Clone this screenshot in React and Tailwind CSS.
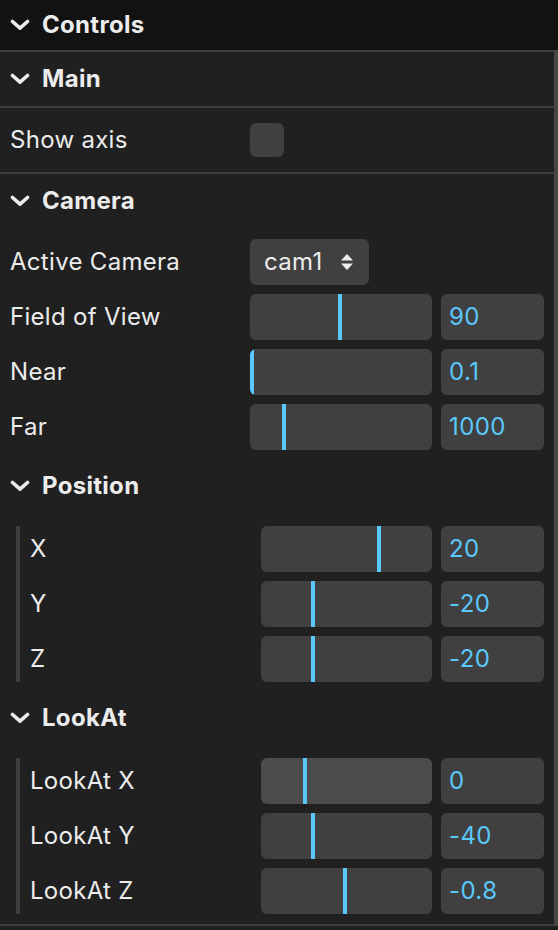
import React from 'react';

const font = { fontFamily: 'Inter, "Noto Sans", sans-serif' };

function Chevron() {
  return (
    <svg width="20" height="12" viewBox="0 0 20 12" className="shrink-0">
      <polyline points="2.5,2.5 10,9.2 17.5,2.5" fill="none" stroke="#ececec" strokeWidth="3.6" strokeLinecap="round" strokeLinejoin="round" />
    </svg>
  );
}

function FolderTitle({ title, className = '' }) {
  return (
    <div className={`flex items-center gap-[12px] px-[10px] ${className}`}>
      <Chevron />
      <span className="text-[24px] tracking-[0.3px] font-bold text-[#ececec]">{title}</span>
    </div>
  );
}

function Slider({ pos, value, hover }) {
  return (
    <div className="flex gap-[9px] flex-1 h-[46px]">
      <div className={`relative flex-1 rounded-[6px] overflow-hidden ${hover ? 'bg-[#4c4c4c]' : 'bg-[#404040]'}`}>
        <div className="absolute top-0 bottom-0 w-[4px] bg-[#5ac8fa]" style={{ left: `${pos}px` }} />
      </div>
      <div className="w-[103px] rounded-[6px] bg-[#404040] flex items-center px-[8px] text-[24px] tracking-[0.4px] text-[#5ac8fa]">
        {value}
      </div>
    </div>
  );
}

function Row({ label, labelWidth = 'w-[240px]', children }) {
  return (
    <div className="flex items-center h-[46px]">
      <span className={`${labelWidth} shrink-0 text-[24px] tracking-[0.3px] text-[#ececec]`}>{label}</span>
      {children}
    </div>
  );
}

export default function App() {
  const cameraRows = [
    { label: 'Field of View', pos: 88, value: '90' },
    { label: 'Near', pos: 0, value: '0.1' },
    { label: 'Far', pos: 32, value: '1000' },
  ];
  const positionRows = [
    { label: 'X', pos: 116, value: '20' },
    { label: 'Y', pos: 50, value: '-20' },
    { label: 'Z', pos: 50, value: '-20' },
  ];
  const lookAtRows = [
    { label: 'LookAt X', pos: 42, value: '0', hover: true },
    { label: 'LookAt Y', pos: 50, value: '-40' },
    { label: 'LookAt Z', pos: 82, value: '-0.8' },
  ];

  return (
    <div className="w-[558px] h-[930px] bg-[#202020] overflow-hidden" style={font}>
      {/* Root header */}
      <div className="h-[50px] bg-[#121212] flex items-center gap-[12px] px-[10px]">
        <Chevron />
        <span className="text-[24px] tracking-[0.3px] font-bold text-[#ececec]">Controls</span>
      </div>

      <div className="border-r-4 border-[#474747]">
        {/* Main */}
        <div className="border-t-2 border-[#3d3d3d]">
          <FolderTitle title="Main" className="h-[56px] border-b-2 border-[#3d3d3d]" />
          <div className="flex items-center h-[66px] px-[10px] border-b-2 border-[#3d3d3d]">
            <span className="w-[240px] text-[24px] tracking-[0.3px] text-[#ececec]">Show axis</span>
            <div className="w-[34px] h-[34px] rounded-[6px] bg-[#404040]" />
          </div>
        </div>

        {/* Camera */}
        <div className="border-b-2 border-[#3d3d3d]">
          <FolderTitle title="Camera" className="h-[54px]" />
          <div className="flex flex-col gap-[9px] pt-[11px] pb-[10px]">
            <div className="px-[10px] flex flex-col gap-[9px]">
              <Row label="Active Camera">
                <div className="w-[119px] h-[46px] rounded-[6px] bg-[#404040] flex items-center justify-between pl-[14px] pr-[15px]">
                  <span className="text-[24px] tracking-[0.3px] text-[#ececec]">cam1</span>
                  <svg width="14" height="20" viewBox="0 0 14 20">
                    <path d="M7 2 L13 8.5 L1 8.5 Z" fill="#ececec" />
                    <path d="M7 18 L13 11.5 L1 11.5 Z" fill="#ececec" />
                  </svg>
                </div>
              </Row>
              {cameraRows.map((r) => (
                <Row key={r.label} label={r.label}>
                  <Slider pos={r.pos} value={r.value} />
                </Row>
              ))}
            </div>

            {/* Position */}
            <div>
              <FolderTitle title="Position" className="h-[54px]" />
              <div className="pt-[13px] pl-[16px] pr-[10px]">
                <div className="border-l-4 border-[#3d3d3d] pl-[10px] flex flex-col gap-[9px]">
                  {positionRows.map((r) => (
                    <Row key={r.label} label={r.label} labelWidth="w-[231px]">
                      <Slider pos={r.pos} value={r.value} />
                    </Row>
                  ))}
                </div>
              </div>
            </div>

            {/* LookAt */}
            <div>
              <FolderTitle title="LookAt" className="h-[54px]" />
              <div className="pt-[13px] pl-[16px] pr-[10px]">
                <div className="border-l-4 border-[#3d3d3d] pl-[10px] flex flex-col gap-[9px]">
                  {lookAtRows.map((r) => (
                    <Row key={r.label} label={r.label} labelWidth="w-[231px]">
                      <Slider pos={r.pos} value={r.value} hover={r.hover} />
                    </Row>
                  ))}
                </div>
              </div>
            </div>
          </div>
        </div>
      </div>
    </div>
  );
}
